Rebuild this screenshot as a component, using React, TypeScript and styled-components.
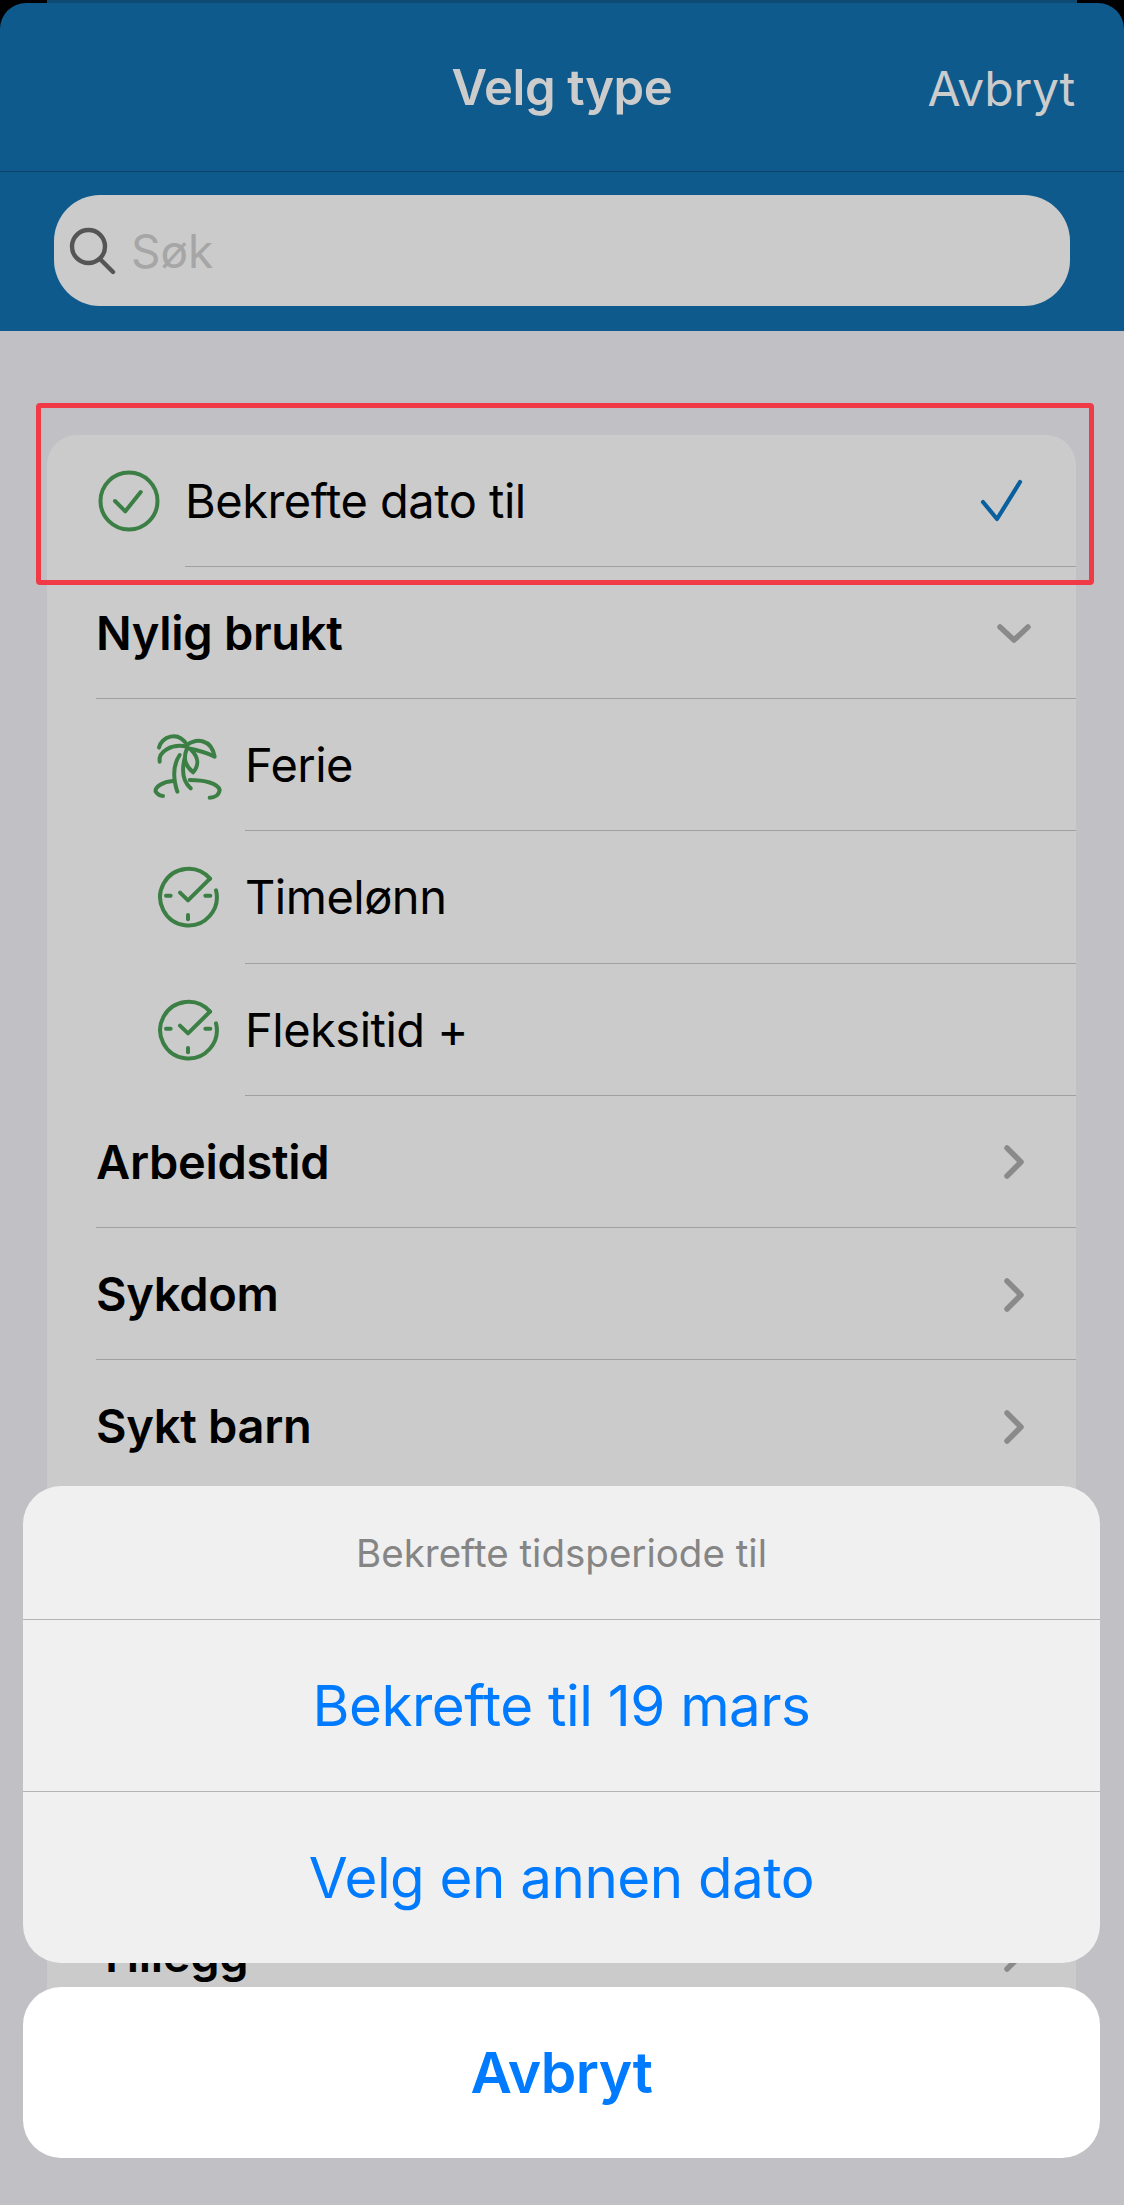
import React from 'react';
import styled, { createGlobalStyle } from 'styled-components';

const FONT = `Inter, 'Liberation Sans', sans-serif`;

const GlobalStyle = createGlobalStyle`
  html, body {
    margin: 0;
    padding: 0;
    background: #c0c0c5;
    font-family: ${FONT};
  }
  * {
    box-sizing: border-box;
  }
`;

function PalmIcon() {
  return (
    <svg width="70" height="70" viewBox="70 85 210 210" fill="none" stroke="#3b7f45" strokeWidth="12" strokeLinecap="round" strokeLinejoin="round">
      <path d="M88 138C95 105 145 85 172 130" />
      <path d="M90 180C85 150 125 125 172 135" />
      <path d="M172 130C200 110 245 110 255 165C225 150 200 145 175 140" />
      <path d="M172 140C160 170 165 190 190 212C210 190 205 165 185 145" />
      <path d="M150 160C130 190 130 230 143 270" />
      <path d="M165 170C155 210 160 240 183 260" />
      <path d="M130 238C100 240 75 255 78 270C85 280 95 283 100 283" />
      <path d="M180 235C225 235 265 245 270 265C268 280 255 288 240 288" />
    </svg>
  );
}

function ClockCheckIcon() {
  return (
    <svg width="64" height="64" viewBox="78 74 192 192" fill="none" stroke="#3b7f45" strokeWidth="12" strokeLinecap="round" strokeLinejoin="round">
      <path d="M240 115A85 85 0 1 0 258 150" />
      <path d="M150 157L174 180L240 115" />
      <path d="M108 166H122" />
      <path d="M226 166H241" />
      <path d="M174 224V237" />
    </svg>
  );
}

function CircleCheckIcon() {
  return (
    <svg width="62" height="62" viewBox="0 0 62 62" fill="none" stroke="#3b7f45" strokeWidth="4" strokeLinecap="round" strokeLinejoin="round">
      <circle cx="31" cy="31" r="28.500" />
      <path d="M17 31L27.300 41.300L42.700 22" />
    </svg>
  );
}

function SearchIcon() {
  return (
    <svg width="48" height="48" viewBox="0 0 48 48" fill="none" stroke="#555555" strokeWidth="4.400" strokeLinecap="round">
      <circle cx="19.500" cy="19.500" r="16.500" />
      <path d="M31 32L44 45" />
    </svg>
  );
}

function Chevron({ open }: { open?: boolean }) {
  return open ? (
    <svg width="38" height="24" viewBox="0 0 38 24" fill="none" stroke="#8a8a8a" strokeWidth="5.500" strokeLinecap="round" strokeLinejoin="round">
      <path d="M5 5L19 18L33 5" />
    </svg>
  ) : (
    <svg width="24" height="38" viewBox="0 0 24 38" fill="none" stroke="#8a8a8a" strokeWidth="5.500" strokeLinecap="round" strokeLinejoin="round">
      <path d="M5 5L19 19L5 33" />
    </svg>
  );
}

function BlueCheck() {
  return (
    <svg width="44" height="44" viewBox="0 0 44 44" fill="none" stroke="#0a5f9e" strokeWidth="4.200" strokeLinecap="round" strokeLinejoin="round">
      <path d="M3 23L17 40L40 3" />
    </svg>
  );
}

export default function App() {
  return (
    <Screen>
      <GlobalStyle />
      <HeaderShell>
        <TopStrip />
        <Header>
          <NavBar>
            <NavTitle>Velg type</NavTitle>
            <NavAction>Avbryt</NavAction>
          </NavBar>
          <SearchArea>
            <SearchBox>
              <SearchIcon />
              <SearchPlaceholder>Søk</SearchPlaceholder>
            </SearchBox>
          </SearchArea>
        </Header>
      </HeaderShell>

      <List>
        <SelectedRow>
          <SelectedIcon>
            <CircleCheckIcon />
          </SelectedIcon>
          <SelectedBody>
            <ItemLabel>Bekrefte dato til</ItemLabel>
            <SelectedMark>
              <BlueCheck />
            </SelectedMark>
          </SelectedBody>
        </SelectedRow>

        <GroupRow>
          <GroupLabel>Nylig brukt</GroupLabel>
          <ChevronSlot>
            <Chevron open />
          </ChevronSlot>
        </GroupRow>

        <SubRow>
          <SubIcon>
            <PalmIcon />
          </SubIcon>
          <SubBody>
            <ItemLabel>Ferie</ItemLabel>
          </SubBody>
        </SubRow>
        <SubRow>
          <SubIcon>
            <ClockCheckIcon />
          </SubIcon>
          <SubBody>
            <ItemLabel>Timelønn</ItemLabel>
          </SubBody>
        </SubRow>
        <SubRow>
          <SubIcon>
            <ClockCheckIcon />
          </SubIcon>
          <SubBody>
            <ItemLabel>Fleksitid +</ItemLabel>
          </SubBody>
        </SubRow>

        <GroupRow>
          <GroupLabel>Arbeidstid</GroupLabel>
          <ChevronSlot>
            <Chevron />
          </ChevronSlot>
        </GroupRow>
        <GroupRow>
          <GroupLabel>Sykdom</GroupLabel>
          <ChevronSlot>
            <Chevron />
          </ChevronSlot>
        </GroupRow>
        <GroupRow>
          <GroupLabel>Sykt barn</GroupLabel>
          <ChevronSlot>
            <Chevron />
          </ChevronSlot>
        </GroupRow>

        <CoveredRows />

        <GroupRow $last>
          <GroupLabel>Tillegg</GroupLabel>
          <ChevronSlot>
            <Chevron />
          </ChevronSlot>
        </GroupRow>
      </List>

      <Highlight />

      <Sheet>
        <SheetGroup>
          <SheetTitle>Bekrefte tidsperiode til</SheetTitle>
          <SheetOption>Bekrefte til 19 mars</SheetOption>
          <SheetOption>Velg en annen dato</SheetOption>
        </SheetGroup>
        <SheetCancel>Avbryt</SheetCancel>
      </Sheet>
    </Screen>
  );
}

const Screen = styled.div`
  position: relative;
  width: 1124px;
  height: 2205px;
  overflow: hidden;
  background: #c0c0c5;
`;

const HeaderShell = styled.div`
  position: relative;
  padding-top: 3px;
  background: #000000;
`;

const TopStrip = styled.div`
  position: absolute;
  top: 0;
  left: 47px;
  right: 47px;
  height: 6px;
  background: #0e4a73;
`;

const Header = styled.header`
  position: relative;
  height: 328px;
  background: #0e5a8c;
  border-radius: 26px 26px 0 0;
`;

const NavBar = styled.div`
  position: relative;
  height: 169px;
  display: flex;
  align-items: center;
  justify-content: center;
  border-bottom: 1px solid #0c4369;
`;

const NavTitle = styled.h1`
  margin: 0;
  font-size: 49px;
  font-weight: 600;
  color: #cccccc;
  letter-spacing: -0.4px;
`;

const NavAction = styled.span`
  position: absolute;
  right: 49px;
  top: 56px;
  font-size: 48px;
  font-weight: 400;
  color: #cccccc;
  letter-spacing: -0.2px;
`;

const SearchArea = styled.div`
  padding: 23px 54px 0;
`;

const SearchBox = styled.div`
  width: 1016px;
  height: 111px;
  background: #cbcbcb;
  border-radius: 46px;
  display: flex;
  align-items: center;
  gap: 14px;
  padding-left: 15px;
`;

const SearchPlaceholder = styled.span`
  font-size: 46px;
  color: #a6a6a6;
`;

const List = styled.section`
  margin: 104px 48px 0 47px;
  background: #cbcbcb;
  border-radius: 30px;
  overflow: hidden;
`;

const SelectedRow = styled.div`
  height: 132px;
  display: flex;
`;

const SelectedIcon = styled.div`
  width: 138px;
  display: flex;
  justify-content: center;
  align-items: center;
  padding-left: 26px;
`;

const SelectedBody = styled.div`
  flex: 1;
  display: flex;
  align-items: center;
  justify-content: space-between;
  border-bottom: 1px solid #a0a0a0;
`;

const SelectedMark = styled.div`
  display: flex;
  padding-right: 52px;
`;

const ItemLabel = styled.span`
  font-size: 47px;
  font-weight: 400;
  color: #000000;
  letter-spacing: -0.5px;
`;

const GroupRow = styled.div<{ $last?: boolean }>`
  height: 132.200px;
  margin-left: 49px;
  display: flex;
  align-items: center;
  justify-content: space-between;
  border-bottom: ${(p) => (p.$last ? 'none' : '1px solid #a0a0a0')};
`;

const GroupLabel = styled.span`
  font-size: 47px;
  font-weight: 600;
  color: #000000;
  letter-spacing: -0.3px;
`;

const ChevronSlot = styled.div`
  width: 44px;
  margin-right: 40px;
  padding-top: 2px;
  display: flex;
  justify-content: center;
`;

const SubRow = styled.div`
  height: 132.200px;
  display: flex;
`;

const SubIcon = styled.div`
  width: 198px;
  padding-left: 84px;
  display: flex;
  align-items: center;
  justify-content: center;
  flex-shrink: 0;
`;

const SubBody = styled.div`
  flex: 1;
  display: flex;
  align-items: center;
  border-bottom: 1px solid #a0a0a0;
`;

const CoveredRows = styled.div`
  height: 396px;
`;

const Highlight = styled.div`
  position: absolute;
  top: 403px;
  left: 36px;
  width: 1058px;
  height: 182px;
  border: 5px solid #f8222f;
  border-radius: 4px;
  opacity: 0.85;
`;

const Sheet = styled.div`
  position: absolute;
  left: 23px;
  width: 1077px;
  top: 1486px;
  display: flex;
  flex-direction: column;
  gap: 24px;
`;

const SheetGroup = styled.div`
  background: #f0f0f0;
  border-radius: 38px;
  overflow: hidden;
`;

const SheetTitle = styled.div`
  height: 133px;
  display: flex;
  align-items: center;
  justify-content: center;
  font-size: 38.500px;
  color: #858585;
`;

const SheetOption = styled.div`
  height: 172px;
  display: flex;
  align-items: center;
  justify-content: center;
  font-size: 56.500px;
  color: #007aff;
  border-top: 1px solid #b4b4b4;
  letter-spacing: -0.5px;
`;

const SheetCancel = styled.div`
  height: 171px;
  display: flex;
  align-items: center;
  justify-content: center;
  background: #ffffff;
  border-radius: 38px;
  font-size: 57px;
  font-weight: 600;
  color: #007aff;
  letter-spacing: -0.5px;
`;
